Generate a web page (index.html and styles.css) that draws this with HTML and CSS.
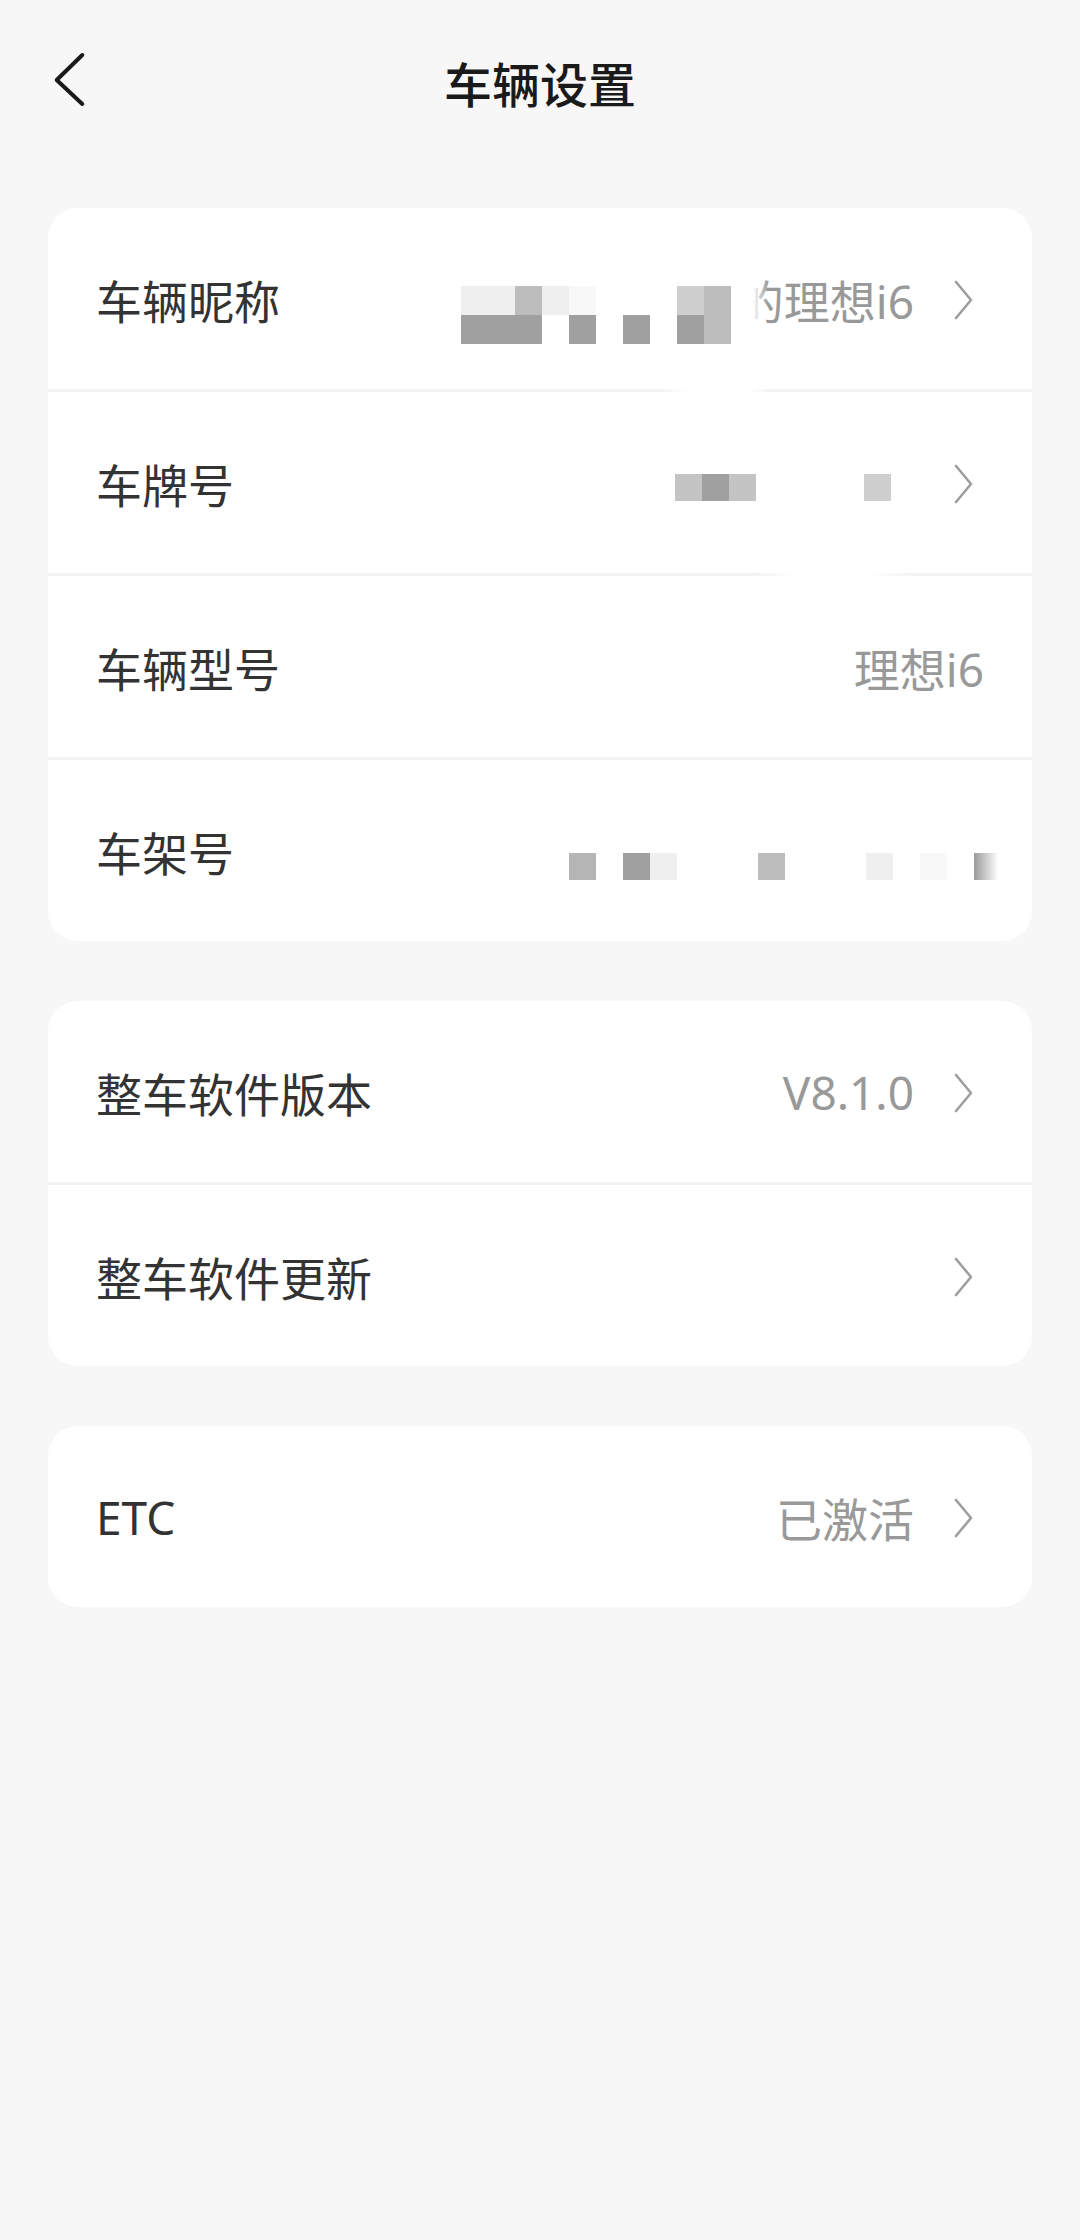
FILE: index.html
```html
<!DOCTYPE html>
<html lang="zh-CN">
<head>
    <meta charset="UTF-8">
    <meta name="viewport" content="width=device-width, initial-scale=1.0">
    <title>车辆设置</title>
    <link rel="stylesheet" href="styles.css">
</head>
<body>
    <header class="navbar">
        <button class="back" aria-label="返回">
            <svg width="40" height="60" viewBox="0 0 40 60">
                <path d="M34.3 5 L8.7 30 L34.3 54" fill="none" stroke="#1a1a1a" stroke-width="4" stroke-linecap="round" stroke-linejoin="round"/>
            </svg>
        </button>
        <h1 class="title">车辆设置</h1>
    </header>

    <section class="card">
        <div class="row">
            <span class="label">车辆昵称</span>
            <div class="value">
                <div class="mosaic mosaic-name">
                    <i class="m2"></i><i class="m2"></i><i class="m5"></i><i class="m2"></i><i class="m1"></i><i></i><i></i><i></i><i class="m3"></i><i class="m5"></i>
                    <i class="m7"></i><i class="m7"></i><i class="m7"></i><i></i><i class="m7"></i><i></i><i class="m7"></i><i></i><i class="m7"></i><i class="m5"></i>
                </div>
                <span class="value-text fade-start">的理想i6</span>
            </div>
            <svg class="arrow" width="40" height="44" viewBox="0 0 40 44"><path d="M12 4 L27 22 L12 40"/></svg>
        </div>
        <div class="divider divider-a"></div>
        <div class="row">
            <span class="label">车牌号</span>
            <div class="value">
                <div class="mosaic mosaic-plate">
                    <i class="m4"></i><i class="m7"></i><i class="m4"></i><i></i><i></i><i></i><i></i><i class="m3"></i>
                </div>
            </div>
            <svg class="arrow" width="40" height="44" viewBox="0 0 40 44"><path d="M12 4 L27 22 L12 40"/></svg>
        </div>
        <div class="divider divider-b"></div>
        <div class="row">
            <span class="label">车辆型号</span>
            <span class="value-text">理想i6</span>
        </div>
        <div class="divider"></div>
        <div class="row">
            <span class="label">车架号</span>
            <div class="mosaic mosaic-vin">
                <i class="m6"></i><i></i><i class="m7"></i><i class="m2"></i><i></i><i></i><i></i><i class="m5"></i><i></i><i></i><i></i><i class="m2"></i><i></i><i class="m1"></i><i></i><i class="mg"></i>
            </div>
        </div>
    </section>

    <section class="card">
        <div class="row">
            <span class="label">整车软件版本</span>
            <span class="value-text with-arrow">V8.1.0</span>
            <svg class="arrow" width="40" height="44" viewBox="0 0 40 44"><path d="M12 4 L27 22 L12 40"/></svg>
        </div>
        <div class="divider"></div>
        <div class="row">
            <span class="label">整车软件更新</span>
            <svg class="arrow" width="40" height="44" viewBox="0 0 40 44"><path d="M12 4 L27 22 L12 40"/></svg>
        </div>
    </section>

    <section class="card">
        <div class="row">
            <span class="label">ETC</span>
            <span class="value-text with-arrow">已激活</span>
            <svg class="arrow" width="40" height="44" viewBox="0 0 40 44"><path d="M12 4 L27 22 L12 40"/></svg>
        </div>
    </section>
</body>
</html>
```

FILE: styles.css
```css
body {
    margin: 0;
    min-height: 2240px;
    background-color: #f7f7f7;
    font-family: 'Noto Sans', 'Noto Sans CJK SC', sans-serif;
    color: #333;
}
.navbar {
    height: 160px;
    display: grid;
    grid-template-columns: 1fr auto 1fr;
    align-items: center;
}
.back {
    justify-self: start;
    margin-left: 48px;
    padding: 0;
    border: none;
    background: none;
    display: flex;
}
.title {
    margin: 4px 0 0;
    font-size: 48px;
    font-weight: 500;
    color: #1a1a1a;
    font-family: 'Noto Sans CJK SC', sans-serif;
}
.card {
    margin: 48px 48px 60px;
    background-color: #fff;
    border-radius: 30px;
    overflow: hidden;
}
.card + .card {
    margin-top: 0;
}
.row {
    height: 181px;
    padding: 0 48px;
    display: flex;
    align-items: center;
    font-size: 46px;
}
.label {
    flex: 1;
    color: #333;
}
.value {
    display: flex;
    align-items: center;
    margin-right: 30px;
}
.value-text {
    color: #999;
    white-space: nowrap;
}
.value-text.with-arrow {
    margin-right: 30px;
}
.arrow {
    margin-top: 3px;
    fill: none;
    stroke: #9e9e9e;
    stroke-width: 2.6;
    stroke-linecap: round;
    stroke-linejoin: round;
}
.divider {
    height: 3px;
    background-color: #f2f2f2;
}
.divider-a {
    background: linear-gradient(to right, #f2f2f2 0 610px, #fff 640px 700px, #f2f2f2 725px);
}
.divider-b {
    background: linear-gradient(to right, #f2f2f2 0 700px, #fff 750px 820px, #f2f2f2 870px);
}

/* mosaic blocks over the hidden values */
.mosaic {
    display: grid;
    grid-auto-rows: 28px;
}
.mosaic i {
    display: block;
}
.mosaic-name {
    grid-template-columns: repeat(10, 27px);
    grid-auto-rows: 29px;
    margin-top: 32px;
    margin-right: 7px;
}
.mosaic-plate {
    grid-template-columns: repeat(8, 27px);
    grid-auto-rows: 27px;
    margin-top: 10px;
    margin-right: 23px;
}
.mosaic-vin {
    grid-template-columns: repeat(16, 27px);
    grid-auto-rows: 27px;
    margin-top: 32px;
    margin-right: -17px;
}
.m1 { background-color: #f8f8f8; }
.m2 { background-color: #efefef; }
.m3 { background-color: #cfcfcf; }
.m4 { background-color: #c4c4c4; }
.m5 { background-color: #bdbdbd; }
.m6 { background-color: #b5b5b5; }
.m7 { background-color: #a0a0a0; }
.mg { background: linear-gradient(to right, #9a9a9a, #fff 90%); }

.fade-start {
    position: relative;
}
.fade-start::before {
    content: "";
    position: absolute;
    left: 0;
    top: 0;
    bottom: 0;
    width: 30px;
    background: linear-gradient(to right, #fff 50%, rgba(255, 255, 255, 0));
}
```
